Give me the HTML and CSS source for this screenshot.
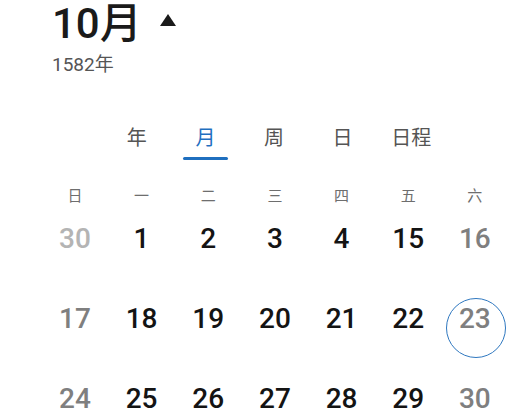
FILE: index.html
```html
<!DOCTYPE html>
<html lang="zh-CN">
<head>
<meta charset="utf-8">
<link rel="stylesheet" href="styles.css">
</head>
<body>
<div class="page">
  <header class="head">
    <div class="title"><span class="month">10月</span><span class="caret"></span></div>
    <div class="year">1582年</div>
  </header>
  <nav class="tabs">
    <span class="tab">年</span>
    <span class="tab active">月</span>
    <span class="tab">周</span>
    <span class="tab">日</span>
    <span class="tab">日程</span>
  </nav>
  <div class="grid weekdays">
    <span>日</span><span>一</span><span>二</span><span>三</span><span>四</span><span>五</span><span>六</span>
  </div>
  <div class="grid days">
    <span class="day other">30</span>
    <span class="day">1</span>
    <span class="day">2</span>
    <span class="day">3</span>
    <span class="day">4</span>
    <span class="day">15</span>
    <span class="day weekend">16</span>
    <span class="day weekend">17</span>
    <span class="day">18</span>
    <span class="day">19</span>
    <span class="day">20</span>
    <span class="day">21</span>
    <span class="day">22</span>
    <span class="day weekend today">23</span>
    <span class="day weekend">24</span>
    <span class="day">25</span>
    <span class="day">26</span>
    <span class="day">27</span>
    <span class="day">28</span>
    <span class="day">29</span>
    <span class="day weekend">30</span>
  </div>
</div>
</body>
</html>
```
FILE: styles.css
```css
* { box-sizing: border-box; }
html, body { margin: 0; padding: 0; background: #fff; }
body {
  font-family: Roboto, "Noto Sans CJK SC", sans-serif;
  width: 531px;
  height: 417px;
  overflow: hidden;
}
.page { display: flex; flex-direction: column; }
.head { padding: 0 0 0 52px; }
.title {
  display: flex;
  align-items: center;
  height: 48px;
  gap: 18px;
}
.month {
  font-size: 42px;
  font-weight: 500;
  color: #1a1a1a;
  line-height: 48px;
}
.caret {
  width: 0; height: 0;
  border-left: 8.5px solid transparent;
  border-right: 8.5px solid transparent;
  border-bottom: 12px solid #1a1a1a;
  margin-top: -8px;
}
.year {
  margin-top: 5px;
  font-size: 19px;
  color: #555;
  line-height: 24px;
}
.tabs {
  margin-top: 40px;
  display: flex;
  padding-left: 102.5px;
  height: 40px;
}
.tab {
  position: relative;
  width: 68.6px;
  text-align: center;
  font-size: 20px;
  line-height: 40px;
  color: #555;
  font-family: "Noto Sans CJK SC", sans-serif;
}
.tab.active { color: #1f6fbf; }
.tab.active::after {
  content: "";
  position: absolute;
  left: 50%;
  bottom: -3px;
  width: 45px;
  height: 3px;
  margin-left: -22px;
  border-radius: 2px;
  background: #1f6fbf;
}
.grid {
  display: grid;
  grid-template-columns: repeat(7, 66.67px);
  padding-left: 41.6px;
}
.weekdays {
  margin-top: 23px;
  height: 30px;
  align-items: center;
}
.weekdays span {
  text-align: center;
  font-size: 15px;
  color: #6e6e6e;
  font-family: "Noto Sans CJK SC", sans-serif;
  line-height: 30px;
}
.days { grid-auto-rows: 80px; }
.day {
  position: relative;
  text-align: center;
  font-size: 28px;
  font-weight: 500;
  color: #141414;
  line-height: 58px;
}
.day.weekend { color: #7f7f7f; }
.day.other { color: #b4b4b4; }
.day.today::after {
  content: "";
  position: absolute;
  left: 50%;
  top: 50%;
  width: 58px;
  height: 58px;
  margin: -32px 0 0 -29px;
  border: 1.5px solid #2f78c0;
  border-radius: 50%;
}
```
